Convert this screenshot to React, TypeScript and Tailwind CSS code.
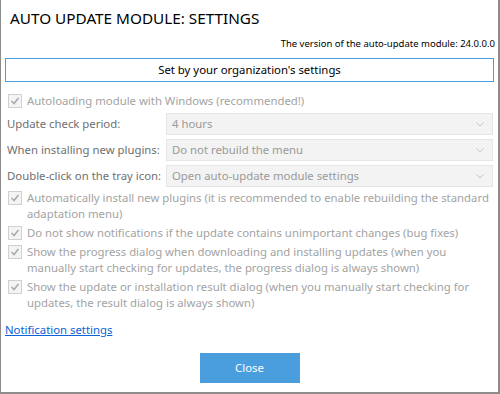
import React from "react";

const font = { fontFamily: '"Noto Sans", "Open Sans", sans-serif' };

function Check() {
  return (
    <span className="mt-[1px] flex h-[14px] w-[14px] shrink-0 items-center justify-center border border-[#d0d0d0] bg-[#f4f4f4]">
      <svg width="12" height="12" viewBox="0 0 12 12">
        <path d="M2.5 6 L5 8.5 L9.5 3" fill="none" stroke="#ababab" strokeWidth="1.6" />
      </svg>
    </span>
  );
}

function CheckRow({ children }: { children: React.ReactNode }) {
  return (
    <div className="flex gap-[5px] pl-[7px] pr-2">
      <Check />
      <div className="whitespace-nowrap leading-[16px] text-[#a3a3a3]">{children}</div>
    </div>
  );
}

function SelectRow({ label, value }: { label: string; value: string }) {
  return (
    <div className="flex items-center">
      <div className="w-[165px] whitespace-nowrap pl-[6px] text-[#707070]">{label}</div>
      <div className="flex h-[22px] w-[327px] items-center justify-between border border-[#e6e6e6] bg-[#f3f3f3] pl-[5px] pr-[8px] text-[#9a9a9a]">
        <span>{value}</span>
        <svg width="8" height="5" viewBox="0 0 8 5">
          <path d="M0.5 0.5 L4 4 L7.5 0.5" fill="none" stroke="#c4c4c4" strokeWidth="1" />
        </svg>
      </div>
    </div>
  );
}

export default function App() {
  return (
    <div
      className="flex h-[394px] w-[500px] flex-col border-b-2 border-l border-r-2 border-[#8c8c8c] bg-white text-[11.35px] text-black"
      style={font}
    >
      <div className="pl-[9px] pt-[7px] text-[15.3px] leading-[22px]">AUTO UPDATE MODULE: SETTINGS</div>
      <div className="mt-[8px] pr-[3px] text-right text-[9.5px] leading-[14px]">
        The version of the auto-update module: 24.0.0.0
      </div>
      <div className="mx-[4px] mt-[7px] flex h-[24px] items-center justify-center border border-[#4a9ede]">
        Set by your organization's settings
      </div>
      <div className="mt-[11px] flex flex-col">
        <CheckRow>Autoloading module with Windows (recommended!)</CheckRow>
        <div className="mt-[4px] flex flex-col gap-[4px]">
          <SelectRow label="Update check period:" value="4 hours" />
          <SelectRow label="When installing new plugins:" value="Do not rebuild the menu" />
          <SelectRow label="Double-click on the tray icon:" value="Open auto-update module settings" />
        </div>
        <div className="mt-[3px] flex flex-col gap-[3px]">
          <CheckRow>
            Automatically install new plugins (it is recommended to enable rebuilding the standard
            <br />
            adaptation menu)
          </CheckRow>
          <CheckRow>Do not show notifications if the update contains unimportant changes (bug fixes)</CheckRow>
          <CheckRow>
            Show the progress dialog when downloading and installing updates (when you
            <br />
            manually start checking for updates, the progress dialog is always shown)
          </CheckRow>
          <CheckRow>
            Show the update or installation result dialog (when you manually start checking for
            <br />
            updates, the result dialog is always shown)
          </CheckRow>
        </div>
      </div>
      <div className="mt-[11px] pl-[4px] leading-[16px]">
        <a href="#" className="text-[#0b63d6] underline">
          Notification settings
        </a>
      </div>
      <div className="mt-[15px] flex justify-center">
        <div className="flex h-[30px] w-[100px] items-center justify-center bg-[#4a9ede] text-white">Close</div>
      </div>
    </div>
  );
}
